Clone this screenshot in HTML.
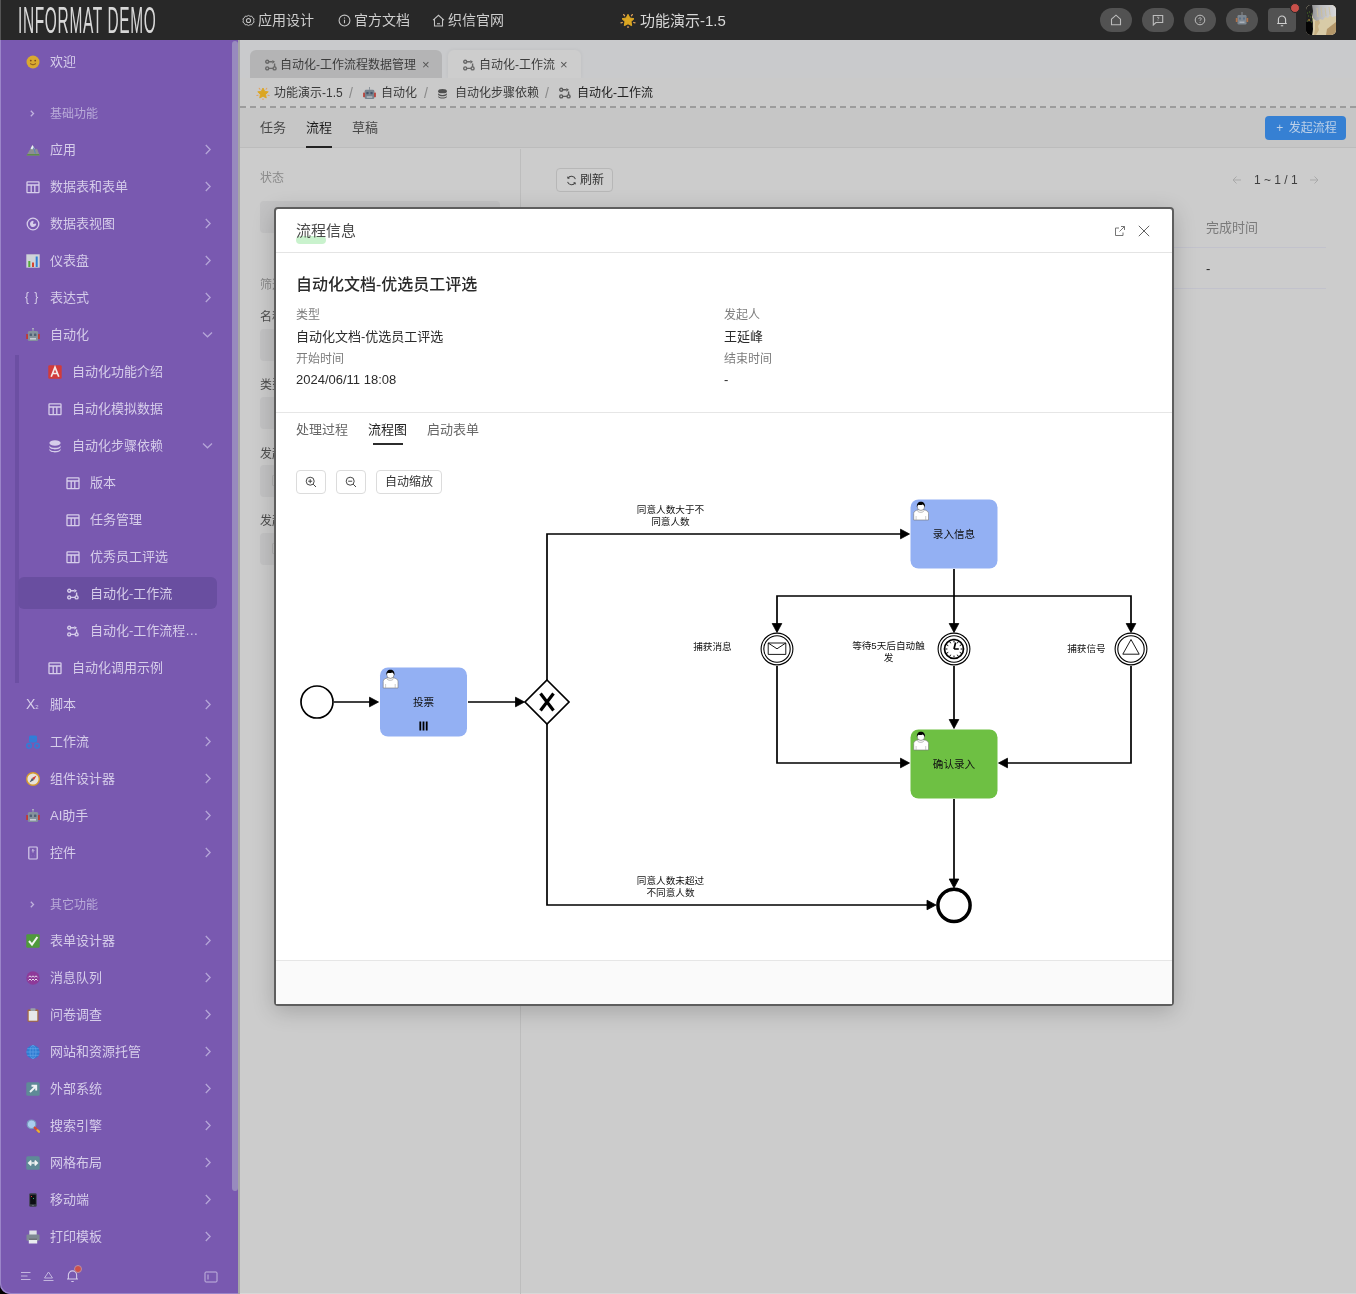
<!DOCTYPE html>
<html lang="zh-CN">
<head>
<meta charset="utf-8">
<title>功能演示-1.5</title>
<style>
*{box-sizing:border-box;margin:0;padding:0}
html,body{width:1356px;height:1294px;overflow:hidden;background:#000}
body{position:relative;font-family:"Liberation Sans","Noto Sans CJK SC",sans-serif;font-size:13px;color:#222}
.abs{position:absolute}
#top,#side,#main,#modal,#dg{will-change:transform}
svg{display:block}
em,i{font-style:normal}
/* top bar */
#top{position:absolute;left:0;top:0;width:1356px;height:40px;background:#282828;color:#cfcfcf;box-shadow:inset 1px 0 0 #555}
#logo{position:absolute;left:18px;top:0;height:40px;line-height:42px;font-size:36px;color:#d8d8d8;white-space:nowrap;transform-origin:0 50%;transform:scaleX(.43);letter-spacing:1.500px}
.tl{position:absolute;top:0;height:40px;line-height:40px;font-size:14px;color:#cdcdcd;white-space:nowrap}
.tl svg{position:absolute;top:14px}
.pill{position:absolute;top:8px;width:32px;height:24px;border-radius:12px;background:#525252}
.pill svg{position:absolute;left:10px;top:6px}
#avatar{position:absolute;left:1306px;top:5px;width:30px;height:30px;border-radius:5px;overflow:hidden;background:#b9b5a6}
/* sidebar */
#side{position:absolute;left:0;top:40px;width:238px;height:1254px;background:#7959b0;border-bottom-left-radius:10px;overflow:hidden;box-shadow:inset 1px -1px 0 #9b85c9}
.mi{position:absolute;left:0;width:232px;height:37px;line-height:37px;color:#d6cdea;font-size:13px;white-space:nowrap}
.mi .ic{position:absolute;left:26px;top:12px;width:14px;height:14px}
.mi .tx{position:absolute;left:50px;top:0}
.mi.l2 .ic{left:48px}.mi.l2 .tx{left:72px}
.mi.l3 .ic{left:66px}.mi.l3 .tx{left:90px}
.mi.grp{color:#b9abd9;font-size:12px}
.mi .ch{position:absolute;left:204px;top:13px}
/* main */
#main{position:absolute;left:240px;top:40px;width:1116px;height:1254px;background:#ccc;overflow:hidden;box-shadow:inset 0 -1px 0 #d8d8d8}
.ptab{position:absolute;top:10px;height:28px;border-radius:6px 6px 0 0;font-size:12px;line-height:30px;color:#3c3c3c;white-space:nowrap}
.ptab span{position:absolute;top:0}
.ptab i{position:absolute;top:0;font-size:13px;color:#555}
.ptab .fi{position:absolute;left:15px;top:9px;width:12px;height:12px}
#bc{position:absolute;left:0;top:39px;width:1116px;height:28px;font-size:12px;line-height:28px;color:#3a3a3a;white-space:nowrap}
#bc span,#bc em,#bc svg{position:absolute}
#bc span{top:0}
#bc em{top:0;color:#8a8a8a;font-size:14px}
.stab{position:absolute;top:68px;height:40px;line-height:40px;font-size:13px;color:#484848}
.flab{position:absolute;left:20px;font-size:12px;line-height:18px;color:#4e4e4e;white-space:nowrap}
.fin{position:absolute;left:20px;width:240px;height:32px;border-radius:4px;background:#c3c3c4}
/* modal */
#modal{position:absolute;left:274px;top:207px;width:900px;height:799px;background:#fff;border:2px solid #5e5e5e;border-radius:4px;box-shadow:0 5px 22px rgba(0,0,0,.2)}
.ml{position:absolute;font-size:12px;line-height:20px;color:#7d7d7d;white-space:nowrap}
.mv{position:absolute;font-size:13px;line-height:22px;color:#2b2b2b;white-space:nowrap}
.mt{position:absolute;top:210px;font-size:13px;line-height:22px;color:#666;white-space:nowrap}
.mb{position:absolute;top:261px;height:24px;border:1px solid #dcdcdc;border-radius:4px;background:#fff;font-size:12px;line-height:22px;text-align:center;color:#333;white-space:nowrap}
.mb svg{position:absolute;left:8px;top:5px}
</style>
</head>
<body>
<div id="top">
  <div id="logo">INFORMAT DEMO</div>
  <div class="tl" style="left:242px"><svg width="13" height="13" viewBox="0 0 12 12" fill="none" stroke="#c4c4c4" stroke-width="1"><path d="M6 .8l1.6.9 1.8-.1.8 1.6 1.5 1-.4 1.8.4 1.8-1.5 1-.8 1.6-1.8-.1L6 11.2l-1.6-.9-1.8.1-.8-1.6-1.5-1L.7 6 .3 4.200l1.5-1 .8-1.6 1.8.1z" transform="translate(.6 .6) scale(.9)"/><circle cx="6" cy="6" r="1.9"/></svg><span style="margin-left:16px">应用设计</span></div>
  <div class="tl" style="left:338px"><svg width="13" height="13" viewBox="0 0 12 12" fill="none" stroke="#c4c4c4" stroke-width="1"><circle cx="6" cy="6" r="5"/><path d="M6 5.2v3.3M6 3.2v1"/></svg><span style="margin-left:16px">官方文档</span></div>
  <div class="tl" style="left:432px"><svg width="13" height="13" viewBox="0 0 12 12" fill="none" stroke="#c4c4c4" stroke-width="1"><path d="M1 5.6L6 1.2l5 4.400M2.300 4.800V11h7.400V4.800"/><path d="M4.600 9h2.800"/></svg><span style="margin-left:16px">织信官网</span></div>
  <div class="tl" style="left:620px;font-size:15px;color:#d8d8d8;line-height:42px"><svg style="top:12px" width="16" height="16" viewBox="0 0 16 16"><path d="M8.0 2.3L9.9 6.0L14.0 6.7L11.0 9.6L11.7 13.7L8.0 11.8L4.3 13.7L5.0 9.6L2.0 6.7L6.1 6.0z" fill="#dba622" stroke="#dba622" stroke-width="1" stroke-linejoin="round"/><path d="M11.5 3.7L12.3 2.6M13.7 10.5L15.0 10.9M8.0 14.6L8.0 16.0M2.3 10.5L1.0 10.9M4.5 3.7L3.7 2.6" stroke="#e3a35c" stroke-width="1.300" stroke-linecap="round" fill="none"/></svg><span style="margin-left:20px">功能演示-1.5</span></div>
  <div class="pill" style="left:1100px"><svg width="12" height="12" viewBox="0 0 12 12" fill="none" stroke="#bdbdbd" stroke-width="1.1"><path d="M1.500 5.200L6 1.200l4.500 4v5.600h-9z"/></svg></div>
  <div class="pill" style="left:1142px"><svg width="12" height="12" viewBox="0 0 12 12" fill="none" stroke="#bdbdbd" stroke-width="1.1"><path d="M1.300 1.500h9.400v7H4L1.300 11z"/><path d="M5 3.700c.3-.7 2-.7 2 .2 0 .7-1 .7-1 1.500M6 6.500v.6" stroke-width=".9"/></svg></div>
  <div class="pill" style="left:1184px"><svg width="12" height="12" viewBox="0 0 12 12" fill="none" stroke="#bdbdbd" stroke-width="1"><circle cx="6" cy="6" r="4.800"/><path d="M4.700 4.800c.2-1.500 2.700-1.400 2.600.1 0 .9-1.300.9-1.300 1.900M6 8.100v.8" stroke-width=".9"/></svg></div>
  <div class="pill" style="left:1226px"><svg style="left:9px;top:4px" width="14" height="15" viewBox="0 0 14 15"><path d="M7 0v3" stroke="#8b8f95" stroke-width="1"/><rect x="2.500" y="3" width="9" height="9.500" rx="1.200" fill="#7d8791"/><rect x=".8" y="6" width="1.700" height="4" fill="#b0724a"/><rect x="11.500" y="6" width="1.700" height="4" fill="#b0724a"/><rect x="4" y="5.500" width="2" height="2" fill="#5b6f86"/><rect x="8" y="5.500" width="2" height="2" fill="#5b6f86"/><rect x="4.500" y="9.500" width="5" height="1.500" fill="#a9b0b8"/></svg></div>
  <div class="pill" style="left:1268px;width:28px;border-radius:4px"><svg style="left:8px" width="12" height="13" viewBox="0 0 12 13" fill="none" stroke="#d0d0d0" stroke-width="1.100"><path d="M1.200 9.500h9.600M2.400 9.500V5.600a3.600 3.600 0 017.200 0v3.900M4.800 11.800h2.400"/></svg></div>
  <div class="abs" style="left:1290px;top:3px;width:10px;height:10px;border-radius:5px;background:#c9504a;border:1.500px solid #282828"></div>
  <div id="avatar"><svg width="30" height="30" viewBox="0 0 30 30"><defs><linearGradient id="hg" x1="0" y1="0" x2="1" y2="0"><stop offset="0" stop-color="#8e8e90"/><stop offset=".35" stop-color="#b9b9bb"/><stop offset="1" stop-color="#d9d9da"/></linearGradient></defs><rect width="30" height="30" fill="#d8cba7"/><path d="M5 0H30V11L26 12 24 10 22 13 19 12 17 15 14 14 12 17 9 15 7 13 6 8z" fill="url(#hg)"/><path d="M11 3l1 9M15 2l1 10M19 3l1 8M23 2l1 8" stroke="#cdbf96" stroke-width="1" fill="none" opacity=".8"/><path d="M0 0H6L7 6 6 12 7 18 6 30H0z" fill="#232323"/><path d="M0 17H6L7 24 6 30H0z" fill="#040404"/><path d="M1 8h1M3 7h1M5 9h1M2 11h1M4 12h1M6 14h1M3 15h1M5 17h1M1 16h1" stroke="#4f7a24" stroke-width="1"/><path d="M2 15h2" stroke="#c98a3a" stroke-width="1"/><path d="M21 24L30 17V30H20z" fill="#b4976a"/><path d="M9 16l4-1 1 3-2 3 1 4-3 5H8l1-6z" fill="#c6ab7c" opacity=".8"/></svg></div>
</div>
<div id="side">
<div class="abs" style="left:15px;top:315px;width:4px;height:328px;background:#6c4fa3"></div>
<div class="abs" style="left:18px;top:537px;width:199px;height:32px;border-radius:6px;background:#694ea0"></div>
<div class="mi" style="top:3px"><svg class="ic" viewBox="0 0 14 14"><circle cx="7" cy="7" r="6.500" fill="#d9a92f"/><circle cx="4.800" cy="5.600" r=".9" fill="#7a4b1c"/><circle cx="9.200" cy="5.600" r=".9" fill="#7a4b1c"/><path d="M4 8.600q3 2.600 6 0" stroke="#7a4b1c" stroke-width=".9" fill="none"/></svg><span class="tx">欢迎</span></div>
<div class="mi grp" style="top:56px"><svg class="ic" style="left:29px;top:13px;width:6px;height:9px" viewBox="0 0 6 9" fill="none" stroke="#c0b2de" stroke-width="1.300"><path d="M1.800 1.800L4.500 4.500 1.800 7.200"/></svg><span class="tx">基础功能</span></div>
<div class="mi" style="top:91px"><svg class="ic" viewBox="0 0 14 14"><path d="M.5 12.500L6.500 2l3 4.500 1.500-1 2.700 7z" fill="#8d8f92"/><path d="M6.500 2L4.600 5.400l1.500 1.200 1.300-1.500 1.400.9z" fill="#e9eef5"/><path d="M.5 12.500h13.200l-.6-1.600H1.500z" fill="#5e8c4a"/><path d="M7.500 4.500l2 6" stroke="#4a7fc9" stroke-width=".8"/></svg><span class="tx">应用</span><svg class="ch" width="8" height="11" viewBox="0 0 8 11" fill="none" stroke="#b5a5d8" stroke-width="1.300"><path d="M1.800 1l4.300 4.500L1.800 10"/></svg></div>
<div class="mi" style="top:128px"><svg class="ic" viewBox="0 0 14 14" fill="none" stroke="#d6cdea" stroke-width="1.300"><rect x="1" y="1.800" width="12" height="10.800" rx=".6"/><path d="M1 5h12M5.200 5v7.600M8.800 5v7.600"/></svg><span class="tx">数据表和表单</span><svg class="ch" width="8" height="11" viewBox="0 0 8 11" fill="none" stroke="#b5a5d8" stroke-width="1.300"><path d="M1.800 1l4.300 4.500L1.800 10"/></svg></div>
<div class="mi" style="top:165px"><svg class="ic" viewBox="0 0 14 14" fill="none" stroke="#d6cdea" stroke-width="1.300"><circle cx="7" cy="7" r="5.800"/><path d="M7.600 3.900A3.100 3.100 0 1010.100 6.400L7 7z" fill="#d6cdea" stroke="none"/></svg><span class="tx">数据表视图</span><svg class="ch" width="8" height="11" viewBox="0 0 8 11" fill="none" stroke="#b5a5d8" stroke-width="1.300"><path d="M1.800 1l4.300 4.500L1.800 10"/></svg></div>
<div class="mi" style="top:202px"><svg class="ic" viewBox="0 0 14 14"><rect x=".3" y=".3" width="13.400" height="13.400" fill="#cfd3d8"/><rect x="2.300" y="7" width="2" height="6" fill="#55a83a"/><rect x="6" y="8.500" width="2" height="4.500" fill="#d64531"/><rect x="9.700" y="2.500" width="2" height="10.500" fill="#2f7fd6"/></svg><span class="tx">仪表盘</span><svg class="ch" width="8" height="11" viewBox="0 0 8 11" fill="none" stroke="#b5a5d8" stroke-width="1.300"><path d="M1.800 1l4.300 4.500L1.800 10"/></svg></div>
<div class="mi" style="top:239px"><span class="ic" style="top:0;left:25px;width:auto;height:auto;font-size:12px;letter-spacing:1px;color:#d6cdea">{&nbsp;}</span><span class="tx">表达式</span><svg class="ch" width="8" height="11" viewBox="0 0 8 11" fill="none" stroke="#b5a5d8" stroke-width="1.300"><path d="M1.800 1l4.300 4.500L1.800 10"/></svg></div>
<div class="mi" style="top:276px"><svg class="ic" viewBox="0 0 14 14"><path d="M7 0v3" stroke="#9aa3ab" stroke-width="1"/><circle cx="7" cy=".8" r=".8" fill="#c0c6cc"/><rect x="1.800" y="3" width="10.400" height="10" rx="1.500" fill="#85929d"/><rect x=".2" y="6" width="1.800" height="5" rx=".5" fill="#c43a32"/><rect x="12" y="6" width="1.800" height="5" rx=".5" fill="#c43a32"/><rect x="3.600" y="5.500" width="2.400" height="2.400" rx=".5" fill="#4f6076"/><rect x="8" y="5.500" width="2.400" height="2.400" rx=".5" fill="#4f6076"/><rect x="4" y="10" width="6" height="1.600" fill="#c7ced4"/></svg><span class="tx">自动化</span><svg class="ch" style="left:202px;top:15px" width="11" height="8" viewBox="0 0 11 8" fill="none" stroke="#b5a5d8" stroke-width="1.300"><path d="M1 1.500l4.500 4.300L10 1.500"/></svg></div>
<div class="mi l2" style="top:313px"><svg class="ic" viewBox="0 0 14 14"><rect x=".3" y=".3" width="13.400" height="13.400" rx="1.200" fill="#d13b3b"/><path d="M3.200 11.800L7 2.200l3.800 9.600M4.700 8.500h4.600" stroke="#f4e9e9" stroke-width="1.700" fill="none"/></svg><span class="tx">自动化功能介绍</span></div>
<div class="mi l2" style="top:350px"><svg class="ic" viewBox="0 0 14 14" fill="none" stroke="#d6cdea" stroke-width="1.300"><rect x="1" y="1.800" width="12" height="10.800" rx=".6"/><path d="M1 5h12M5.200 5v7.600M8.800 5v7.600"/></svg><span class="tx">自动化模拟数据</span></div>
<div class="mi l2" style="top:387px"><svg class="ic" viewBox="0 0 14 14" fill="#d6cdea"><ellipse cx="7" cy="4" rx="5.600" ry="2.800"/><path d="M1.400 6.200c0 3.400 11.200 3.400 11.200 0v1.600c0 3.500-11.200 3.500-11.200 0z"/><path d="M1.400 9.400c0 3.400 11.200 3.400 11.200 0v1.400c0 3.500-11.200 3.500-11.200 0z"/></svg><span class="tx">自动化步骤依赖</span><svg class="ch" style="left:202px;top:15px" width="11" height="8" viewBox="0 0 11 8" fill="none" stroke="#b5a5d8" stroke-width="1.300"><path d="M1 1.500l4.500 4.300L10 1.500"/></svg></div>
<div class="mi l3" style="top:424px"><svg class="ic" viewBox="0 0 14 14" fill="none" stroke="#d6cdea" stroke-width="1.300"><rect x="1" y="1.800" width="12" height="10.800" rx=".6"/><path d="M1 5h12M5.200 5v7.600M8.800 5v7.600"/></svg><span class="tx">版本</span></div>
<div class="mi l3" style="top:461px"><svg class="ic" viewBox="0 0 14 14" fill="none" stroke="#d6cdea" stroke-width="1.300"><rect x="1" y="1.800" width="12" height="10.800" rx=".6"/><path d="M1 5h12M5.200 5v7.600M8.800 5v7.600"/></svg><span class="tx">任务管理</span></div>
<div class="mi l3" style="top:498px"><svg class="ic" viewBox="0 0 14 14" fill="none" stroke="#d6cdea" stroke-width="1.300"><rect x="1" y="1.800" width="12" height="10.800" rx=".6"/><path d="M1 5h12M5.200 5v7.600M8.800 5v7.600"/></svg><span class="tx">优秀员工评选</span></div>
<div class="mi l3" style="top:535px"><svg class="ic" viewBox="-1 -1 14 14" fill="none" stroke="#d6cdea" stroke-width="1.400"><circle cx="2.200" cy="2.800" r="1.500"/><circle cx="2.200" cy="9.400" r="1.500"/><circle cx="9.600" cy="9.400" r="1.500"/><path d="M3.700 2.800h3.800M3.700 9.400h4.400M9.600 4.600v3.300"/><path d="M7.400 .9l2.600 1.900-2.600 1.900z" fill="#d6cdea" stroke="none"/></svg><span class="tx">自动化-工作流</span></div>
<div class="mi l3" style="top:572px"><svg class="ic" viewBox="-1 -1 14 14" fill="none" stroke="#d6cdea" stroke-width="1.400"><circle cx="2.200" cy="2.800" r="1.500"/><circle cx="2.200" cy="9.400" r="1.500"/><circle cx="9.600" cy="9.400" r="1.500"/><path d="M3.700 2.800h3.800M3.700 9.400h4.400M9.600 4.600v3.300"/><path d="M7.400 .9l2.600 1.900-2.600 1.900z" fill="#d6cdea" stroke="none"/></svg><span class="tx">自动化-工作流程…</span></div>
<div class="mi l2" style="top:609px"><svg class="ic" viewBox="0 0 14 14" fill="none" stroke="#d6cdea" stroke-width="1.300"><rect x="1" y="1.800" width="12" height="10.800" rx=".6"/><path d="M1 5h12M5.200 5v7.600M8.800 5v7.600"/></svg><span class="tx">自动化调用示例</span></div>
<div class="mi" style="top:646px"><span class="ic" style="top:0;left:26px;width:auto;height:auto;font-size:14px;color:#d6cdea">X<span style="font-size:6px;margin-left:0">2</span></span><span class="tx">脚本</span><svg class="ch" width="8" height="11" viewBox="0 0 8 11" fill="none" stroke="#b5a5d8" stroke-width="1.300"><path d="M1.800 1l4.300 4.500L1.800 10"/></svg></div>
<div class="mi" style="top:683px"><svg class="ic" viewBox="0 0 14 14"><rect x="3" y=".5" width="8" height="7" rx="1.500" fill="#2f7ed8"/><circle cx="3" cy="10.800" r="2.300" fill="none" stroke="#2f7ed8" stroke-width="1.400"/><circle cx="11" cy="10.800" r="2.300" fill="none" stroke="#2f7ed8" stroke-width="1.400"/><path d="M5 3.500l1 1M9 3.500l-1 1" stroke="#7959b0" stroke-width=".8"/></svg><span class="tx">工作流</span><svg class="ch" width="8" height="11" viewBox="0 0 8 11" fill="none" stroke="#b5a5d8" stroke-width="1.300"><path d="M1.800 1l4.300 4.500L1.800 10"/></svg></div>
<div class="mi" style="top:720px"><svg class="ic" viewBox="0 0 14 14"><circle cx="7" cy="7" r="6.300" fill="#e8e4da" stroke="#d79b2c" stroke-width="1.400"/><path d="M10.500 3.500L6 6l2 2z" fill="#d23c30"/><path d="M3.500 10.500L8 8 6 6z" fill="#4b5a6b"/></svg><span class="tx">组件设计器</span><svg class="ch" width="8" height="11" viewBox="0 0 8 11" fill="none" stroke="#b5a5d8" stroke-width="1.300"><path d="M1.800 1l4.300 4.500L1.800 10"/></svg></div>
<div class="mi" style="top:757px"><svg class="ic" viewBox="0 0 14 14"><path d="M7 0v3" stroke="#9aa3ab" stroke-width="1"/><circle cx="7" cy=".8" r=".8" fill="#c0c6cc"/><rect x="1.800" y="3" width="10.400" height="10" rx="1.500" fill="#85929d"/><rect x=".2" y="6" width="1.800" height="5" rx=".5" fill="#c43a32"/><rect x="12" y="6" width="1.800" height="5" rx=".5" fill="#c43a32"/><rect x="3.600" y="5.500" width="2.400" height="2.400" rx=".5" fill="#4f6076"/><rect x="8" y="5.500" width="2.400" height="2.400" rx=".5" fill="#4f6076"/><rect x="4" y="10" width="6" height="1.600" fill="#c7ced4"/></svg><span class="tx">AI助手</span><svg class="ch" width="8" height="11" viewBox="0 0 8 11" fill="none" stroke="#b5a5d8" stroke-width="1.300"><path d="M1.800 1l4.300 4.500L1.800 10"/></svg></div>
<div class="mi" style="top:794px"><svg class="ic" viewBox="0 0 14 14" fill="none" stroke="#d6cdea" stroke-width="1.200"><rect x="2.800" y="1" width="8.400" height="12" rx=".8"/><path d="M7 3.500v3M5.800 4.700L7 3.500l1.200 1.200" stroke-width=".9"/><path d="M5.400 9.700h.1M8.500 9.700h.1" stroke-width="1.600"/></svg><span class="tx">控件</span><svg class="ch" width="8" height="11" viewBox="0 0 8 11" fill="none" stroke="#b5a5d8" stroke-width="1.300"><path d="M1.800 1l4.300 4.500L1.800 10"/></svg></div>
<div class="mi grp" style="top:847px"><svg class="ic" style="left:29px;top:13px;width:6px;height:9px" viewBox="0 0 6 9" fill="none" stroke="#c0b2de" stroke-width="1.300"><path d="M1.800 1.800L4.500 4.500 1.800 7.200"/></svg><span class="tx">其它功能</span></div>
<div class="mi" style="top:882px"><svg class="ic" viewBox="0 0 14 14"><rect x=".3" y=".3" width="13.400" height="13.400" rx="1.200" fill="#4f9a3c"/><path d="M3 7l3 3.600 5.400-7.600" stroke="#f3f6f1" stroke-width="2" fill="none"/></svg><span class="tx">表单设计器</span><svg class="ch" width="8" height="11" viewBox="0 0 8 11" fill="none" stroke="#b5a5d8" stroke-width="1.300"><path d="M1.800 1l4.300 4.500L1.800 10"/></svg></div>
<div class="mi" style="top:919px"><svg class="ic" viewBox="0 0 14 14"><circle cx="7" cy="7" r="6.700" fill="#8e3a99"/><path d="M2.500 6.300l1.500-1.500 1.500 1.500L7 4.800l1.500 1.500L10 4.800l1.500 1.500M2.500 9.500L4 8l1.500 1.500L7 8l1.500 1.500L10 8l1.500 1.500" stroke="#e9dff0" stroke-width="1" fill="none"/></svg><span class="tx">消息队列</span><svg class="ch" width="8" height="11" viewBox="0 0 8 11" fill="none" stroke="#b5a5d8" stroke-width="1.300"><path d="M1.800 1l4.300 4.500L1.800 10"/></svg></div>
<div class="mi" style="top:956px"><svg class="ic" viewBox="0 0 14 14"><rect x="1.500" y="1.500" width="11" height="12.200" rx="1" fill="#a4693d"/><rect x="2.700" y="3" width="8.600" height="9.700" fill="#e6e8ea"/><rect x="4.500" y=".3" width="5" height="2.600" rx=".6" fill="#9aa1a8"/></svg><span class="tx">问卷调查</span><svg class="ch" width="8" height="11" viewBox="0 0 8 11" fill="none" stroke="#b5a5d8" stroke-width="1.300"><path d="M1.800 1l4.300 4.500L1.800 10"/></svg></div>
<div class="mi" style="top:993px"><svg class="ic" viewBox="0 0 14 14"><circle cx="7" cy="7" r="6.700" fill="#2d7bd1"/><g fill="none" stroke="#5d9fe6" stroke-width=".8"><ellipse cx="7" cy="7" rx="3" ry="6.700"/><path d="M.3 7h13.400M7 .3v13.400M1.300 3.700h11.400M1.300 10.300h11.400"/></g></svg><span class="tx">网站和资源托管</span><svg class="ch" width="8" height="11" viewBox="0 0 8 11" fill="none" stroke="#b5a5d8" stroke-width="1.300"><path d="M1.800 1l4.300 4.500L1.800 10"/></svg></div>
<div class="mi" style="top:1030px"><svg class="ic" viewBox="0 0 14 14"><rect x=".3" y=".3" width="13.400" height="13.400" rx="1.500" fill="#5f8a97"/><path d="M4 10l5.500-5.500M5.500 3.800h4.700v4.700" stroke="#f0f3f4" stroke-width="1.900" fill="none"/></svg><span class="tx">外部系统</span><svg class="ch" width="8" height="11" viewBox="0 0 8 11" fill="none" stroke="#b5a5d8" stroke-width="1.300"><path d="M1.800 1l4.300 4.500L1.800 10"/></svg></div>
<div class="mi" style="top:1067px"><svg class="ic" viewBox="0 0 14 14"><circle cx="5.500" cy="5.300" r="4.300" fill="#a9cdee" stroke="#7c9cc0" stroke-width="1.200"/><path d="M8.800 8.600l4.200 4.200" stroke="#d84a2e" stroke-width="2.200" stroke-linecap="round"/><path d="M11.500 11.300l1.500 1.500" stroke="#e3b23a" stroke-width="2.200" stroke-linecap="round"/></svg><span class="tx">搜索引擎</span><svg class="ch" width="8" height="11" viewBox="0 0 8 11" fill="none" stroke="#b5a5d8" stroke-width="1.300"><path d="M1.800 1l4.300 4.500L1.800 10"/></svg></div>
<div class="mi" style="top:1104px"><svg class="ic" viewBox="0 0 14 14"><rect x=".3" y=".3" width="13.400" height="13.400" rx="1.500" fill="#5f8a97"/><path d="M3.500 7h7M5.300 4.600L2.800 7l2.500 2.400M8.700 4.600L11.200 7 8.700 9.400" stroke="#f0f3f4" stroke-width="1.700" fill="none"/></svg><span class="tx">网格布局</span><svg class="ch" width="8" height="11" viewBox="0 0 8 11" fill="none" stroke="#b5a5d8" stroke-width="1.300"><path d="M1.800 1l4.300 4.500L1.800 10"/></svg></div>
<div class="mi" style="top:1141px"><svg class="ic" viewBox="0 0 14 14"><rect x="3.300" y=".2" width="7.400" height="13.600" rx="1.300" fill="#3a3f47"/><rect x="4.200" y="1.800" width="5.600" height="9.400" fill="#0d0f14"/><circle cx="7" cy="12.500" r=".6" fill="#8a9098"/><rect x="5" y="3" width="1" height="1" fill="#d33"/><rect x="7" y="5" width="1" height="1" fill="#3a7"/></svg><span class="tx">移动端</span><svg class="ch" width="8" height="11" viewBox="0 0 8 11" fill="none" stroke="#b5a5d8" stroke-width="1.300"><path d="M1.800 1l4.300 4.500L1.800 10"/></svg></div>
<div class="mi" style="top:1178px"><svg class="ic" viewBox="0 0 14 14"><rect x="3.300" y=".5" width="7.400" height="4.500" fill="#dfe3e7"/><rect x=".5" y="4.500" width="13" height="6.300" rx="1" fill="#7e8993"/><rect x="2.800" y="8.500" width="8.400" height="5" fill="#e9ecef"/><rect x="2.800" y="8.500" width="8.400" height="1.200" fill="#3a4048"/></svg><span class="tx">打印模板</span><svg class="ch" width="8" height="11" viewBox="0 0 8 11" fill="none" stroke="#b5a5d8" stroke-width="1.300"><path d="M1.800 1l4.300 4.500L1.800 10"/></svg></div>
<svg class="abs" style="left:20px;top:1230px" width="12" height="12" viewBox="0 0 12 12" fill="none" stroke="#c3b6de" stroke-width="1"><path d="M1 2.500h9.500M1 6h6.500M1 9.500h9.500"/></svg>
<svg class="abs" style="left:42px;top:1230px" width="13" height="12" viewBox="0 0 13 12" fill="none" stroke="#c3b6de" stroke-width="1"><path d="M6.500 2L2.500 8h8zM1.500 10.500h10"/></svg>
<svg class="abs" style="left:66px;top:1229px" width="13" height="14" viewBox="0 0 13 14" fill="none" stroke="#d3c9e8" stroke-width="1.100"><path d="M1 10h11M2.400 10V6a4.100 4.100 0 018.200 0v4M5.300 12.500h2.400"/></svg>
<div class="abs" style="left:74px;top:1225px;width:8px;height:8px;border-radius:4px;background:#cf5048;border:1px solid #b88fa8"></div>
<svg class="abs" style="left:204px;top:1231px" width="14" height="12" viewBox="0 0 14 12" fill="none" stroke="#c3b6de" stroke-width="1"><rect x="1" y="1" width="12" height="10" rx="1"/><path d="M4 3.500v5"/></svg>
<div class="abs" style="left:232px;top:1px;width:6px;height:1150px;border-radius:3px;background:#988abe"></div>
</div>
<div class="abs" style="left:238px;top:40px;width:2px;height:1254px;background:#a6a6a6"></div>
<div id="main">
  <!-- tab bar -->
  <div class="abs" style="left:0;top:0;width:1116px;height:38px;background:#c9cacc"></div>
  <div class="ptab" style="left:10px;width:192px;background:#b4b4b5"><svg class="fi" viewBox="0 0 12 12" fill="none" stroke="#686868" stroke-width="1.400"><circle cx="2.200" cy="2.800" r="1.500"/><circle cx="2.200" cy="9.400" r="1.500"/><circle cx="9.600" cy="9.400" r="1.500"/><path d="M3.700 2.800h3.800M3.700 9.400h4.400M9.600 4.600v3.300"/><path d="M7.400 .9l2.600 1.900-2.600 1.900z" fill="#686868" stroke="none"/></svg><span style="left:30px">自动化-工作流程数据管理</span><i style="left:172px">×</i></div>
  <div class="ptab" style="left:208px;width:133px;background:#cdcdcd;box-shadow:0 0 4px rgba(0,0,0,.06)"><svg class="fi" viewBox="0 0 12 12" fill="none" stroke="#686868" stroke-width="1.400"><circle cx="2.200" cy="2.800" r="1.500"/><circle cx="2.200" cy="9.400" r="1.500"/><circle cx="9.600" cy="9.400" r="1.500"/><path d="M3.700 2.800h3.800M3.700 9.400h4.400M9.600 4.600v3.300"/><path d="M7.400 .9l2.600 1.900-2.600 1.900z" fill="#686868" stroke="none"/></svg><span style="left:31px">自动化-工作流</span><i style="left:112px">×</i></div>
  <!-- breadcrumb -->
  <div class="abs" style="left:0;top:38px;width:1116px;height:28px;background:#cacaca"></div>
  <div id="bc">
    <svg style="left:16px;top:7px" width="14" height="14" viewBox="0 0 16 16"><path d="M8.0 2.3L9.9 6.0L14.0 6.7L11.0 9.6L11.7 13.7L8.0 11.8L4.3 13.7L5.0 9.6L2.0 6.7L6.1 6.0z" fill="#dba622" stroke="#dba622" stroke-width="1" stroke-linejoin="round"/><path d="M11.5 3.7L12.3 2.6M13.7 10.5L15.0 10.9M8.0 14.6L8.0 16.0M2.3 10.5L1.0 10.9M4.5 3.7L3.7 2.6" stroke="#e3a35c" stroke-width="1.300" stroke-linecap="round" fill="none"/></svg>
    <span style="left:34px">功能演示-1.5</span><em style="left:109px">/</em>
    <svg style="left:123px;top:8px" width="13" height="13" viewBox="0 0 14 14"><path d="M7 0v3" stroke="#8a9299" stroke-width="1"/><rect x="1.800" y="3" width="10.400" height="10" rx="1.500" fill="#77838e"/><rect x=".2" y="6" width="1.800" height="5" rx=".5" fill="#b5362f"/><rect x="12" y="6" width="1.800" height="5" rx=".5" fill="#b5362f"/><rect x="3.600" y="5.500" width="2.400" height="2.400" rx=".5" fill="#44546a"/><rect x="8" y="5.500" width="2.400" height="2.400" rx=".5" fill="#44546a"/><rect x="4" y="10" width="6" height="1.600" fill="#b7bec4"/></svg>
    <span style="left:141px">自动化</span><em style="left:184px">/</em>
    <svg style="left:197px;top:9px" width="11" height="11" viewBox="0 0 14 14" fill="#505050"><ellipse cx="7" cy="4" rx="5.600" ry="2.800"/><path d="M1.400 6.200c0 3.400 11.200 3.400 11.200 0v1.600c0 3.500-11.200 3.500-11.200 0z"/><path d="M1.400 9.400c0 3.400 11.200 3.400 11.200 0v1.400c0 3.500-11.200 3.500-11.200 0z"/></svg>
    <span style="left:215px">自动化步骤依赖</span><em style="left:305px">/</em>
    <svg style="left:319px;top:8px" width="12" height="12" viewBox="0 0 12 12" fill="none" stroke="#5a5a5a" stroke-width="1.400"><circle cx="2.200" cy="2.800" r="1.500"/><circle cx="2.200" cy="9.400" r="1.500"/><circle cx="9.600" cy="9.400" r="1.500"/><path d="M3.700 2.800h3.800M3.700 9.400h4.400M9.600 4.600v3.300"/><path d="M7.400 .9l2.600 1.900-2.600 1.900z" fill="#5a5a5a" stroke="none"/></svg>
    <span style="left:337px;color:#222">自动化-工作流</span>
  </div>
  <div class="abs" style="left:0;top:66px;width:1116px;height:0;border-top:2px dashed #9c9c9c"></div>
  <!-- sub tabs -->
  <div class="abs" style="left:0;top:68px;width:1116px;height:40px;background:#c6c6c6;border-bottom:1px solid #bcbcbc"></div>
  <div class="stab" style="left:20px">任务</div>
  <div class="stab" style="left:66px;color:#1c1c1c">流程</div>
  <div class="stab" style="left:112px">草稿</div>
  <div class="abs" style="left:66px;top:106px;width:26px;height:2px;background:#222"></div>
  <div class="abs" style="left:1025px;top:76px;width:81px;height:24px;border-radius:4px;background:#3680d3;color:#bcd0e8;word-spacing:2px;font-size:12px;line-height:25px;text-align:center;white-space:nowrap;padding-left:2px">+ 发起流程</div>
  <!-- left filter -->
  <div class="abs" style="left:280px;top:109px;width:1px;height:1145px;background:#bdbdbd"></div>
  <div class="flab" style="top:129px;color:#8a8a8a">状态</div>
  <div class="fin" style="top:161px"></div>
  <div class="flab" style="top:236px;color:#8a8a8a">筛选</div>
  <div class="flab" style="top:268px">名称</div>
  <div class="fin" style="top:289px"></div>
  <div class="flab" style="top:336px">类型</div>
  <div class="fin" style="top:357px"></div>
  <div class="flab" style="top:405px">发起人</div>
  <div class="fin" style="top:425px"></div>
  <div class="flab" style="top:472px">发起时间</div>
  <div class="fin" style="top:493px"></div>
  <div class="abs" style="left:32px;top:435px;width:11px;height:11px;border:1px solid #b2b2b2;border-radius:1px"></div>
  <div class="abs" style="left:32px;top:503px;width:11px;height:11px;border:1px solid #b2b2b2;border-radius:1px"></div>
  <!-- right panel -->
  <div class="abs" style="left:316px;top:128px;width:57px;height:24px;border:1px solid #b7b7b7;border-radius:4px;background:#cecece;font-size:12px;line-height:22px;color:#333;white-space:nowrap"><svg class="abs" style="left:9px;top:6px" width="11" height="11" viewBox="0 0 12 12" fill="none" stroke="#444" stroke-width="1.100"><path d="M10.300 4.500A4.600 4.600 0 002 3.600M1.700 7.500A4.600 4.600 0 0010 8.400"/><path d="M1.600 1.800l.4 2 2-.4M10.400 10.200l-.4-2-2 .4" stroke-width=".9"/></svg><span class="abs" style="left:23px">刷新</span></div>
  <div class="abs" style="left:990px;top:130px;width:94px;height:20px;line-height:20px;font-size:12px;color:#3a3a3a;white-space:nowrap"><svg class="abs" style="left:2px;top:5px" width="10" height="10" viewBox="0 0 10 10" fill="none" stroke="#a9a9a9" stroke-width="1"><path d="M9 5H1.200M4.500 1.500L1 5l3.500 3.500"/></svg><span class="abs" style="left:23px;color:#3f3f3f;left:24px">1 ~ 1 / 1</span><svg class="abs" style="left:79px;top:5px" width="10" height="10" viewBox="0 0 10 10" fill="none" stroke="#a9a9a9" stroke-width="1"><path d="M1 5h7.800M5.500 1.500L9 5 5.500 8.500"/></svg></div>
  <div class="abs" style="left:966px;top:178px;font-size:13px;line-height:20px;color:#7a7a7a">完成时间</div>
  <div class="abs" style="left:933px;top:207px;width:153px;height:1px;background:#c2c2cc"></div>
  <div class="abs" style="left:966px;top:219px;font-size:13px;line-height:20px;color:#222">-</div>
  <div class="abs" style="left:933px;top:248px;width:153px;height:1px;background:#c2c2cc"></div>
</div>
<div id="modal">
  <div class="abs" style="left:0;top:0;width:896px;height:44px;border-bottom:1px solid #e4e4e4"></div>
  <div class="abs" style="left:20px;top:27px;width:30px;height:8px;border-radius:4px;background:#c9f2cd"></div>
  <div class="abs" style="left:20px;top:10px;font-size:15px;line-height:24px;color:#4a4a4a;white-space:nowrap">流程信息</div>
  <svg class="abs" style="left:838px;top:16px" width="12" height="12" viewBox="0 0 12 12" fill="none" stroke="#666" stroke-width=".9"><path d="M5 3H1.500v7.500H9V7.500M7 1.500h3.500V5M10.500 1.500L5.500 6.500"/></svg>
  <svg class="abs" style="left:862px;top:16px" width="12" height="12" viewBox="0 0 12 12" fill="none" stroke="#505050" stroke-width=".9"><path d="M.8 .8l10.400 10.400M11.200 .8L.8 11.200"/></svg>
  <div class="abs" style="left:20px;top:63px;font-size:16px;line-height:26px;font-weight:500;color:#2a2a2a;white-space:nowrap">自动化文档-优选员工评选</div>
  <div class="ml" style="left:20px;top:96px">类型</div>
  <div class="mv" style="left:20px;top:117px">自动化文档-优选员工评选</div>
  <div class="ml" style="left:20px;top:140px">开始时间</div>
  <div class="mv" style="left:20px;top:160px">2024/06/11 18:08</div>
  <div class="ml" style="left:448px;top:96px">发起人</div>
  <div class="mv" style="left:448px;top:117px">王延峰</div>
  <div class="ml" style="left:448px;top:140px">结束时间</div>
  <div class="mv" style="left:448px;top:160px">-</div>
  <div class="abs" style="left:0;top:203px;width:896px;height:1px;background:#e6e6e6"></div>
  <div class="mt" style="left:20px">处理过程</div>
  <div class="mt" style="left:92px;color:#222">流程图</div>
  <div class="mt" style="left:151px">启动表单</div>
  <div class="abs" style="left:97px;top:234px;width:30px;height:2px;background:#2c2c2c"></div>
  <div class="mb" style="left:20px;width:30px"><svg width="12" height="12" viewBox="0 0 12 12" fill="none" stroke="#444" stroke-width="1"><circle cx="5.200" cy="5.200" r="4"/><path d="M8.200 8.200l2.800 2.800M3.200 5.200h4M5.200 3.200v4"/></svg></div>
  <div class="mb" style="left:60px;width:30px"><svg width="12" height="12" viewBox="0 0 12 12" fill="none" stroke="#444" stroke-width="1"><circle cx="5.200" cy="5.200" r="4"/><path d="M8.200 8.200l2.800 2.800M3.200 5.200h4"/></svg></div>
  <div class="mb" style="left:100px;width:66px">自动缩放</div>
  <div class="abs" style="left:0;top:751px;width:896px;height:44px;background:#fafafa;border-top:1px solid #e6e6e6"></div>
</div>
<svg id="dg" class="abs" style="left:0;top:0" width="1356" height="1294" viewBox="0 0 1356 1294">
<style>.tt{font-family:"Liberation Sans","Noto Sans CJK SC",sans-serif;font-size:10.600px;text-anchor:middle;fill:#111}.lb{font-family:"Liberation Sans","Noto Sans CJK SC",sans-serif;font-size:9.650px;text-anchor:middle;fill:#111}</style>
<g fill="none" stroke="#000" stroke-width="1.700" stroke-linejoin="miter">
<path d="M334 702H372"/>
<path d="M468 702H518"/>
<path d="M547 680V534H902"/>
<path d="M547 724V905H929"/>
<path d="M954 569V626"/>
<path d="M954 596H777V626"/>
<path d="M954 596H1131V626"/>
<path d="M777 666V763H902"/>
<path d="M954 666V722"/>
<path d="M1131 666V763H1006"/>
<path d="M954 799V881"/>
</g>
<g fill="#000" stroke="#000" stroke-width=".8" stroke-linejoin="round">
<path d="M378.5 702L369.5 697.2L369.5 706.8z"/>
<path d="M524.5 702L515.5 697.2L515.5 706.8z"/>
<path d="M909.5 534L900.5 529.2L900.5 538.8z"/>
<path d="M936 905L927 900.2L927 909.8z"/>
<path d="M777 632.5L772.2 623.5L781.8 623.5z"/>
<path d="M954 632.5L949.2 623.5L958.8 623.5z"/>
<path d="M1131 632.5L1126.2 623.5L1135.8 623.5z"/>
<path d="M909.5 763L900.5 758.2L900.5 767.8z"/>
<path d="M954 728.5L949.2 719.5L958.8 719.5z"/>
<path d="M998.5 763L1007.5 758.2L1007.5 767.8z"/>
<path d="M954 888L949.2 879L958.8 879z"/>
</g>
<circle cx="317" cy="702" r="16" fill="#fff" stroke="#000" stroke-width="1.700"/>
<circle cx="954" cy="905.300" r="16.100" fill="#fff" stroke="#000" stroke-width="3.500"/>
<rect x="380" y="667.5" width="87" height="69" rx="8" fill="#93b0f3"/><g transform="translate(380 667.5)"><path d="M3.200 20.500V14c0-2.200 2-3.200 4.800-3.800h5.200c2.800.6 4.800 1.600 4.800 3.800v6.500z" fill="#fff" stroke="#777" stroke-width=".6"/><path d="M6.800 11c.8 2.400 6 2.400 6.800 0" fill="none" stroke="#888" stroke-width=".6"/><path d="M5.600 16.500v4M15.200 16.500v4" stroke="#aaa" stroke-width=".6"/><circle cx="10.400" cy="7.200" r="3.700" fill="#fff" stroke="#444" stroke-width=".5"/><path d="M6.500 7.600c-.6-3.400 1.300-5.400 3.900-5.400s4.700 2 3.900 5.600c-.5-1.700-1.300-2.500-2.200-2.800-1.300.7-3.300.7-4.400.2-.6.500-1 1.400-1.200 2.400z" fill="#000"/></g><text x="423.5" y="705.7" class="tt">投票</text><path d="M420.3 721.5v9M423.5 721.5v9M426.7 721.5v9" stroke="#000" stroke-width="1.800" fill="none"/>
<rect x="910.5" y="499.5" width="87" height="69" rx="8" fill="#93b0f3"/><g transform="translate(910.5 499.5)"><path d="M3.200 20.500V14c0-2.200 2-3.200 4.800-3.800h5.200c2.800.6 4.800 1.600 4.800 3.800v6.500z" fill="#fff" stroke="#777" stroke-width=".6"/><path d="M6.800 11c.8 2.400 6 2.400 6.800 0" fill="none" stroke="#888" stroke-width=".6"/><path d="M5.600 16.500v4M15.200 16.500v4" stroke="#aaa" stroke-width=".6"/><circle cx="10.400" cy="7.200" r="3.700" fill="#fff" stroke="#444" stroke-width=".5"/><path d="M6.500 7.600c-.6-3.400 1.300-5.400 3.900-5.400s4.700 2 3.900 5.600c-.5-1.700-1.300-2.500-2.200-2.800-1.300.7-3.300.7-4.400.2-.6.500-1 1.400-1.200 2.400z" fill="#000"/></g><text x="954" y="537.7" class="tt">录入信息</text>
<rect x="910.5" y="729.5" width="87" height="69" rx="8" fill="#6ec043"/><g transform="translate(910.5 729.5)"><path d="M3.200 20.500V14c0-2.200 2-3.200 4.800-3.800h5.200c2.800.6 4.800 1.600 4.800 3.800v6.500z" fill="#fff" stroke="#777" stroke-width=".6"/><path d="M6.800 11c.8 2.400 6 2.400 6.800 0" fill="none" stroke="#888" stroke-width=".6"/><path d="M5.600 16.500v4M15.200 16.500v4" stroke="#aaa" stroke-width=".6"/><circle cx="10.400" cy="7.200" r="3.700" fill="#fff" stroke="#444" stroke-width=".5"/><path d="M6.500 7.600c-.6-3.400 1.300-5.400 3.900-5.400s4.700 2 3.900 5.600c-.5-1.700-1.300-2.500-2.200-2.800-1.300.7-3.300.7-4.400.2-.6.500-1 1.400-1.200 2.400z" fill="#000"/></g><text x="954" y="767.7" class="tt">确认录入</text>
<path d="M547 680L569 702L547 724L525 702z" fill="#fff" stroke="#000" stroke-width="1.700"/>
<path d="M540.500 693.500L553.500 710.500M553.500 693.500L540.500 710.500" stroke="#000" stroke-width="3.200" fill="none"/>
<circle cx="777" cy="649" r="15.900" fill="#fff" stroke="#000" stroke-width="1.100"/><circle cx="777" cy="649" r="13.200" fill="#fff" stroke="#000" stroke-width="1.100"/>
<path d="M768.200 643h17.600v11.400h-17.600zM768.200 643l8.800 5.800 8.800-5.800" fill="#fff" stroke="#000" stroke-width=".9"/>
<circle cx="954" cy="649" r="15.900" fill="#fff" stroke="#000" stroke-width="1.100"/><circle cx="954" cy="649" r="13.200" fill="#fff" stroke="#000" stroke-width="1.100"/>
<circle cx="954" cy="649" r="9.500" fill="#fff" stroke="#000" stroke-width="1.700"/>
<path d="M954.00 642.40L954.00 640.40M957.30 643.28L958.30 641.55M959.72 645.70L961.45 644.70M960.60 649.00L962.60 649.00M959.72 652.30L961.45 653.30M957.30 654.72L958.30 656.45M954.00 655.60L954.00 657.60M950.70 654.72L949.70 656.45M948.28 652.30L946.55 653.30M947.40 649.00L945.40 649.00M948.28 645.70L946.55 644.70M950.70 643.28L949.70 641.55" stroke="#000" stroke-width="1" fill="none"/>
<path d="M954 649L955.600 642.500M954 649H958.800" stroke="#000" stroke-width="1.700" fill="none"/>
<circle cx="1131" cy="649" r="15.900" fill="#fff" stroke="#000" stroke-width="1.100"/><circle cx="1131" cy="649" r="13.200" fill="#fff" stroke="#000" stroke-width="1.100"/>
<path d="M1131 639.500L1139.200 654.200H1122.800z" fill="#fff" stroke="#000" stroke-width=".9"/>
<text x="670.5" y="513" class="lb">同意人数大于不</text>
<text x="670.5" y="524.6" class="lb">同意人数</text>
<text x="712.5" y="649.8" class="lb">捕获消息</text>
<text x="888.5" y="649" class="lb">等待5天后自动触</text>
<text x="888.5" y="660.5" class="lb">发</text>
<text x="1086.5" y="652.3" class="lb">捕获信号</text>
<text x="670.5" y="884.3" class="lb">同意人数未超过</text>
<text x="670.5" y="896.2" class="lb">不同意人数</text>
</svg>
</body>
</html>
